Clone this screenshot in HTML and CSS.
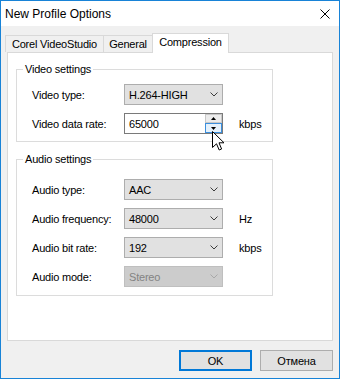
FILE: index.html
```html
<!DOCTYPE html>
<html>
<head>
<meta charset="utf-8">
<link rel="stylesheet" href="styles.css">
</head>
<body>
<div class="window">
  <div class="titlebar">
    <span class="title">New Profile Options</span>
    <svg class="close" width="10" height="10" viewBox="0 0 10 10"><path d="M0.5 0.5 L9.5 9.5 M9.5 0.5 L0.5 9.5" stroke="#000" stroke-width="1" fill="none"/></svg>
  </div>
  <div class="client">
    <div class="tabs">
      <div class="tab t1">Corel VideoStudio</div>
      <div class="tab t2">General</div>
      <div class="tab t3 active">Compression</div>
    </div>
    <div class="panel">
      <fieldset class="group video">
        <legend>Video settings</legend>
        <div class="rows">
          <div class="row">
            <span class="label">Video type:</span>
            <div class="combo"><span>H.264-HIGH</span><svg width="8" height="5" viewBox="0 0 8 5"><polyline points="0.5,0.5 4,4 7.5,0.5" fill="none" stroke="#3c3c3c"/></svg></div>
          </div>
          <div class="row">
            <span class="label">Video data rate:</span>
            <div class="spin-input">
              <span class="value">65000</span>
              <div class="spinner">
                <div class="sbtn up"><svg width="5" height="3" viewBox="0 0 5 3"><polygon points="2.5,0 5,3 0,3" fill="#000"/></svg></div>
                <div class="sbtn down"><svg width="5" height="3" viewBox="0 0 5 3"><polygon points="0,0 5,0 2.5,3" fill="#000"/></svg></div>
              </div>
            </div>
            <span class="unit">kbps</span>
          </div>
        </div>
      </fieldset>
      <fieldset class="group audio">
        <legend>Audio settings</legend>
        <div class="rows">
          <div class="row">
            <span class="label">Audio type:</span>
            <div class="combo"><span>AAC</span><svg width="8" height="5" viewBox="0 0 8 5"><polyline points="0.5,0.5 4,4 7.5,0.5" fill="none" stroke="#3c3c3c"/></svg></div>
          </div>
          <div class="row">
            <span class="label">Audio frequency:</span>
            <div class="combo"><span>48000</span><svg width="8" height="5" viewBox="0 0 8 5"><polyline points="0.5,0.5 4,4 7.5,0.5" fill="none" stroke="#3c3c3c"/></svg></div>
            <span class="unit">Hz</span>
          </div>
          <div class="row">
            <span class="label">Audio bit rate:</span>
            <div class="combo"><span>192</span><svg width="8" height="5" viewBox="0 0 8 5"><polyline points="0.5,0.5 4,4 7.5,0.5" fill="none" stroke="#3c3c3c"/></svg></div>
            <span class="unit">kbps</span>
          </div>
          <div class="row">
            <span class="label">Audio mode:</span>
            <div class="combo disabled"><span>Stereo</span><svg width="8" height="5" viewBox="0 0 8 5"><polyline points="0.5,0.5 4,4 7.5,0.5" fill="none" stroke="#a8a8a8"/></svg></div>
          </div>
        </div>
      </fieldset>
    </div>
    <div class="buttons">
      <button class="btn default">OK</button>
      <button class="btn">Отмена</button>
    </div>
  </div>
</div>
<svg class="cursor" width="13" height="20" viewBox="0 0 13 20"><path d="M0.5 0.5 L0.5 16.5 L4.5 12.8 L7.2 19 L9.6 18 L7 11.8 L12 11.8 Z" fill="#fff" stroke="#000" stroke-width="1" stroke-linejoin="miter"/></svg>
</body>
</html>
```
FILE: styles.css
```css
html, body {
  margin: 0;
  padding: 0;
}
body {
  width: 340px;
  height: 379px;
  overflow: hidden;
  font-family: "Liberation Sans", Arial, sans-serif;
  font-size: 11px;
  letter-spacing: -0.2px;
  color: #000;
}
.window {
  box-sizing: border-box;
  width: 340px;
  height: 379px;
  border: 1px solid #1883d7;
  display: flex;
  flex-direction: column;
}
.titlebar {
  height: 25px;
  flex: none;
  background: #fff;
  display: flex;
  align-items: center;
  justify-content: space-between;
  padding-left: 4px;
  font-size: 12px;
  letter-spacing: 0;
}
.close {
  margin-right: 9px;
  display: block;
}
.client {
  flex: 1;
  background: #f0f0f0;
  padding: 7px 6px 0;
  display: flex;
  flex-direction: column;
}
.tabs {
  display: flex;
  align-items: flex-end;
  height: 20px;
  margin-left: -2px;
  margin-bottom: -1px;
  position: relative;
  z-index: 1;
}
.tab {
  box-sizing: border-box;
  height: 17px;
  margin-bottom: 1px;
  line-height: 16px;
  text-align: center;
  border-top: 1px solid #d9d9d9;
  background: #f0f0f0;
  white-space: nowrap;
}
.t1 {
  width: 99px;
  border-left: 1px solid #d9d9d9;
  border-right: 1px solid #d9d9d9;
}
.t2 {
  width: 48px;
}
.tab.active {
  width: 77px;
  height: 20px;
  margin-bottom: 0;
  background: #fff;
  border-left: 1px solid #d9d9d9;
  border-right: 1px solid #d9d9d9;
  line-height: 16px;
}
.panel {
  box-sizing: border-box;
  height: 289px;
  border: 1px solid #d9d9d9;
  background: #fff;
  padding: 0 8px;
}
.group {
  box-sizing: border-box;
  width: 257px;
  margin: 0;
  border: 1px solid #dcdcdc;
  padding: 0;
  min-inline-size: 0;
}
.group legend {
  padding: 0 2px;
  margin-left: 6px;
  line-height: 13px;
}
.video {
  margin-top: 10px;
  padding-top: 8px;
  padding-bottom: 7px;
}
.audio {
  margin-top: 11px;
  padding-top: 13px;
  padding-bottom: 8px;
}
.rows {
  display: flex;
  flex-direction: column;
  gap: 8px;
}
.row {
  display: flex;
  align-items: center;
  height: 21px;
  padding-left: 15px;
}
.label {
  width: 92px;
  flex: none;
}
.combo {
  box-sizing: border-box;
  width: 99px;
  height: 21px;
  border: 1px solid #adadad;
  background: #e1e1e1;
  display: flex;
  align-items: center;
  justify-content: space-between;
  padding: 0 4px 0 4px;
}
.combo svg {
  display: block;
}
.combo.disabled {
  background: #cccccc;
  border-color: #bfbfbf;
  color: #838383;
}
.unit {
  margin-left: 16px;
}
.spin-input {
  box-sizing: border-box;
  width: 99px;
  height: 21px;
  border: 1px solid #7a7a7a;
  background: #fff;
  display: flex;
  align-items: center;
}
.value {
  flex: 1;
  padding-left: 4px;
}
.spinner {
  width: 17px;
  height: 19px;
  display: flex;
  flex-direction: column;
}
.sbtn {
  box-sizing: border-box;
  display: flex;
  align-items: center;
  justify-content: center;
}
.sbtn svg {
  display: block;
}
.sbtn.up {
  height: 9px;
  border: 1px solid #c8c8c8;
  background: #ececec;
}
.sbtn.down {
  height: 10px;
  border: 1px solid #3c8fdd;
  background: #e5f1fb;
}
.buttons {
  display: flex;
  justify-content: flex-end;
  gap: 8px;
  margin-top: 9px;
}
.btn {
  box-sizing: border-box;
  width: 73px;
  height: 21px;
  padding: 0;
  margin: 0;
  font-family: "Liberation Sans", Arial, sans-serif;
  font-size: 11px;
  letter-spacing: -0.2px;
  color: #000;
  background: #e1e1e1;
  border: 1px solid #adadad;
}
.btn.default {
  border: 2px solid #0078d7;
}
.cursor {
  position: absolute;
  left: 212px;
  top: 131px;
}
```
